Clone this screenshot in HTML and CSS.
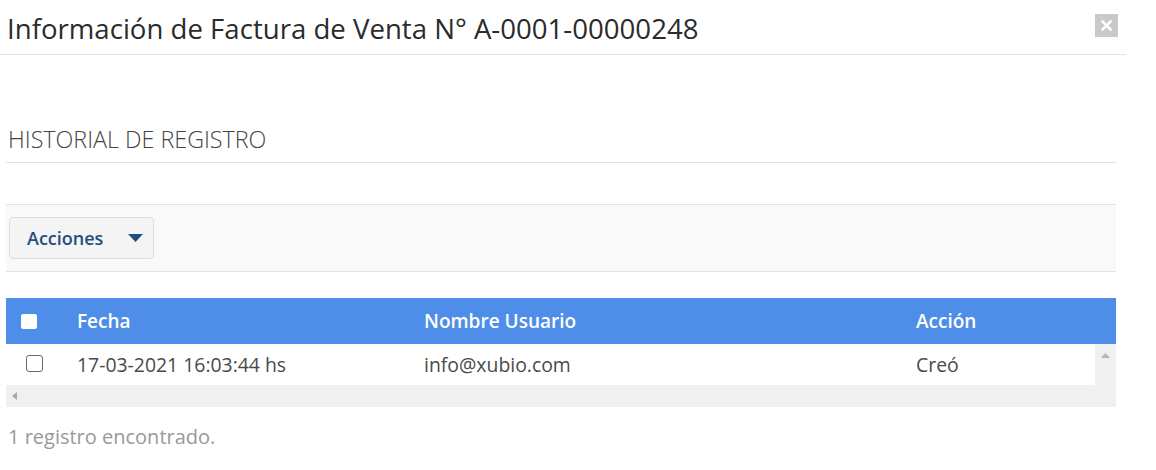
FILE: index.html
```html
<!DOCTYPE html>
<html lang="es">
<head>
<meta charset="utf-8">
<title>Información de Factura</title>
<link rel="stylesheet" href="styles.css">
</head>
<body>
<div class="modal">
  <div class="modal-header">
    <h4 class="modal-title">Información de Factura de Venta N° A-0001-00000248</h4>
    <button class="close-btn" type="button" aria-label="Cerrar">
      <svg width="11" height="11" viewBox="0 0 11 11"><path d="M1.5 1.5 L9.5 9.5 M9.5 1.5 L1.5 9.5" stroke="#fff" stroke-width="2.6" stroke-linecap="square"/></svg>
    </button>
  </div>
  <div class="modal-body">
    <div class="section-title">HISTORIAL DE REGISTRO</div>
    <div class="toolbar">
      <button class="btn-acciones" type="button">
        <span>Acciones</span>
        <svg class="caret" width="15" height="8" viewBox="0 0 15 8"><path d="M0 0 H15 L7.5 8 Z" fill="#1f4f7e"/></svg>
      </button>
    </div>
    <div class="grid">
      <div class="grid-head">
        <div class="cell cell-check"><span class="chk-head"></span></div>
        <div class="cell cell-fecha">Fecha</div>
        <div class="cell cell-user">Nombre Usuario</div>
        <div class="cell cell-accion">Acción</div>
      </div>
      <div class="grid-body">
        <div class="grid-row">
          <div class="cell cell-check"><span class="chk-row"></span></div>
          <div class="cell cell-fecha">17-03-2021 16:03:44 hs</div>
          <div class="cell cell-user">info@xubio.com</div>
          <div class="cell cell-accion">Creó</div>
        </div>
        <div class="vscroll">
          <svg width="9" height="5" viewBox="0 0 9 5"><path d="M0 5 L4.5 0 L9 5 Z" fill="#b5b5b5"/></svg>
        </div>
      </div>
      <div class="hscroll">
        <svg width="5" height="8" viewBox="0 0 5 8"><path d="M5 0 L0 4 L5 8 Z" fill="#a8a8a8"/></svg>
      </div>
    </div>
    <div class="footer-count">1 registro encontrado.</div>
  </div>
</div>
</body>
</html>
```
FILE: styles.css
```css
html, body {
  margin: 0;
  padding: 0;
  background: #fff;
}
body {
  font-family: "Open Sans", "Noto Sans", sans-serif;
  color: #333;
}
.modal {
  width: 1126px;
}
.modal-header {
  height: 54px;
  border-bottom: 1px solid #e3e3e3;
  display: flex;
  align-items: flex-start;
  justify-content: space-between;
  padding: 0 8px 0 7px;
}
.modal-title {
  margin: 0;
  padding-top: 10px;
  font-size: 27.6px;
  line-height: 36px;
  font-weight: 400;
  color: #2b2b2b;
}
.close-btn {
  margin-top: 14px;
  width: 23px;
  height: 23px;
  padding: 0;
  border: none;
  background: #c9c9c9;
  display: flex;
  align-items: center;
  justify-content: center;
}
.modal-body {
  padding: 0 10px 0 6px;
}
.section-title {
  margin-top: 69px;
  font-size: 23.3px;
  line-height: 30px;
  font-weight: 300;
  color: #444;
  padding: 0 0 8px 2px;
  border-bottom: 1px solid #e0e0e0;
}
.toolbar {
  margin-top: 41px;
  border-top: 1px solid #e2e2e2;
  border-bottom: 1px solid #e2e2e2;
  background: #f9f9f9;
  padding: 12px 3px;
  display: flex;
}
.btn-acciones {
  width: 145px;
  height: 42px;
  box-sizing: border-box;
  border: 1px solid #dedede;
  border-radius: 4px;
  background: #f4f4f4;
  display: flex;
  align-items: center;
  padding: 0 0 0 17px;
  font-family: "Open Sans", "Noto Sans", sans-serif;
  font-size: 18px;
  font-weight: 600;
  color: #1f4f7e;
}
.btn-acciones .caret {
  margin-left: 25px;
}
.grid {
  margin-top: 26px;
}
.grid-head {
  display: grid;
  grid-template-columns: 56px 347px 492px 1fr;
  height: 46px;
  background: #4f8ee8;
  color: #fff;
  font-size: 19px;
  font-weight: 600;
}
.cell {
  display: flex;
  align-items: center;
  padding-left: 15px;
}
.cell-check {
  padding-left: 15px;
}
.chk-head {
  width: 16px;
  height: 15px;
  background: #fff;
  border-radius: 2px;
}
.grid-body {
  display: flex;
  height: 41px;
}
.grid-row {
  flex: 1;
  display: grid;
  grid-template-columns: 56px 347px 492px 1fr;
  font-size: 19.4px;
  color: #4a4a4a;
}
.grid-row .cell-check {
  padding-left: 20px;
}
.chk-row {
  width: 15px;
  height: 15px;
  border: 1px solid #6a6a6a;
  border-radius: 3px;
  background: #fff;
  margin-top: -2px;
}
.vscroll {
  width: 21px;
  background: #f0f0f0;
  display: flex;
  justify-content: center;
  align-items: flex-start;
  padding-top: 9px;
  box-sizing: border-box;
}
.hscroll {
  height: 22px;
  background: #f0f0f0;
  display: flex;
  align-items: center;
  padding-left: 6px;
}
.footer-count {
  margin-top: 17px;
  padding-left: 2px;
  font-size: 20px;
  line-height: 26px;
  color: #999;
}
```
